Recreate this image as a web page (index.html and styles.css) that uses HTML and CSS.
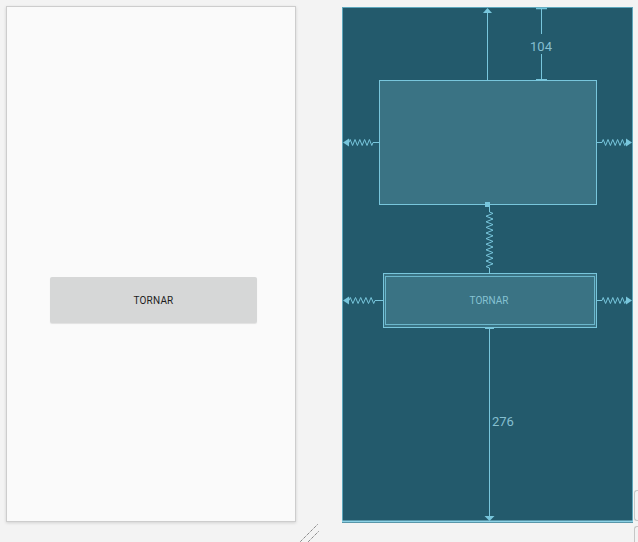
FILE: index.html
```html
<!DOCTYPE html>
<html>
<head>
<meta charset="utf-8">
<link rel="stylesheet" href="styles.css">
</head>
<body>
<div class="canvas">
  <div class="design">
    <div class="btn">TORNAR</div>
  </div>
  <div class="blueprint">
    <svg class="bp-svg" width="291" height="516" viewBox="343 7 291 516" xmlns="http://www.w3.org/2000/svg">
      <rect x="343" y="7" width="291" height="516" fill="#235a6c"/>
      <rect x="343.5" y="7.5" width="290" height="514" fill="none" stroke="#5ea7bc" stroke-width="1"/>
      <line x1="343" y1="521.5" x2="634" y2="521.5" stroke="#8dd2e6" stroke-width="2"/>

      <!-- top box -->
      <rect x="380.5" y="80.5" width="217" height="124" fill="#3a7384" stroke="#78c6dc" stroke-width="1"/>
      <!-- top constraint arrow -->
      <line x1="488.5" y1="10" x2="488.5" y2="80" stroke="#78c6dc" stroke-width="1"/>
      <polygon points="484,13 493,13 488.5,8" fill="#78c6dc"/>
      <!-- dimension 104 -->
      <line x1="542.5" y1="8" x2="542.5" y2="34" stroke="#78c6dc" stroke-width="1"/>
      <line x1="542.5" y1="54" x2="542.5" y2="80" stroke="#78c6dc" stroke-width="1"/>
      <line x1="537" y1="8.5" x2="548" y2="8.5" stroke="#78c6dc" stroke-width="1.5"/>
      <line x1="537" y1="80" x2="548" y2="80" stroke="#78c6dc" stroke-width="2"/>
      <text class="dim" x="542" y="50.5" text-anchor="middle">104</text>

      <!-- top box side springs -->
      <polygon points="344,142.5 350,138.5 350,146.5" fill="#78c6dc"/>
      <polyline fill="none" stroke="#78c6dc" stroke-width="1" points="350,142.5 351.2,139.5 353.6,145.5 356,139.5 358.4,145.5 360.8,139.5 363.2,145.5 365.6,139.5 368,145.5 370.4,139.5 372.8,145.5 374,142.5 380,142.5"/>
      <polyline fill="none" stroke="#78c6dc" stroke-width="1" points="597,142.5 603,142.5 604.2,139.5 606.6,145.5 609,139.5 611.4,145.5 613.8,139.5 616.2,145.5 618.6,139.5 621,145.5 623.4,139.5 625.8,145.5 627,142.5"/>
      <polygon points="627,138.5 627,146.5 633,142.5" fill="#78c6dc"/>

      <!-- anchor + vertical spring -->
      <rect x="486" y="202" width="5" height="5" fill="#78c6dc"/>
      <polyline fill="none" stroke="#78c6dc" stroke-width="1" points="490.5,207 490.5,212 494,213.4 487,216.2 494,219 487,221.8 494,224.6 487,227.4 494,230.2 487,233 494,235.8 487,238.6 494,241.4 487,244.2 494,247 487,249.8 494,252.6 487,255.4 494,258.2 487,261 494,263.8 487,266.6 490.5,268 490.5,273"/>

      <!-- button -->
      <rect x="384.5" y="273.5" width="213" height="54" fill="#3a7384" stroke="#78c6dc" stroke-width="1"/>
      <rect x="386.5" y="276.5" width="209" height="48" fill="none" stroke="#6bb7cc" stroke-width="1"/>
      <text class="btn-label" x="490" y="304" text-anchor="middle">TORNAR</text>

      <!-- button side springs -->
      <polygon points="344,300.5 350,296.5 350,304.5" fill="#78c6dc"/>
      <polyline fill="none" stroke="#78c6dc" stroke-width="1" points="350,300.5 351.3,297.5 353.9,303.5 356.5,297.5 359.1,303.5 361.7,297.5 364.3,303.5 366.9,297.5 369.5,303.5 372.1,297.5 374.7,303.5 376,300.5 384,300.5"/>
      <polyline fill="none" stroke="#78c6dc" stroke-width="1" points="597,300.5 603,300.5 604.2,297.5 606.6,303.5 609,297.5 611.4,303.5 613.8,297.5 616.2,303.5 618.6,297.5 621,303.5 623.4,297.5 625.8,303.5 627,300.5"/>
      <polygon points="627,296.5 627,304.5 633,300.5" fill="#78c6dc"/>

      <!-- bottom constraint -->
      <line x1="486" y1="328" x2="495" y2="328" stroke="#78c6dc" stroke-width="2"/>
      <line x1="490.5" y1="328" x2="490.5" y2="517" stroke="#78c6dc" stroke-width="1"/>
      <polygon points="485.5,516 495.5,516 490.5,521" fill="#78c6dc"/>
      <text class="dim" x="493" y="426">276</text>
    </svg>
  </div>
  <div class="edge">
    <div class="edge-tab tall"></div>
    <div class="edge-tab"></div>
  </div>
</div>
<svg class="resize" width="22" height="19" viewBox="298 523 22 19" xmlns="http://www.w3.org/2000/svg">
  <line x1="317.5" y1="524.5" x2="299.5" y2="542.5" stroke="#5a5a5a" stroke-width="1" stroke-dasharray="1 1"/>
  <line x1="318.5" y1="531.5" x2="307.5" y2="542.5" stroke="#5a5a5a" stroke-width="1" stroke-dasharray="1 1"/>
</svg>
</body>
</html>
```

FILE: styles.css
```css
html, body {
  margin: 0;
  padding: 0;
  width: 638px;
  height: 542px;
  overflow: hidden;
  background: #f3f3f3;
  font-family: Roboto, "Liberation Sans", sans-serif;
}

.canvas {
  display: flex;
  align-items: flex-start;
  padding: 6px 0 0 6px;
  height: 542px;
  box-sizing: border-box;
}

.design {
  width: 291px;
  height: 516px;
  box-sizing: border-box;
  border: 1px solid #cdcdcd;
  background: #fafafa;
  box-shadow: 0 1px 3px rgba(0, 0, 0, 0.14);
  padding: 270px 0 0 43px;
}

.btn {
  width: 207px;
  height: 46px;
  background: #d6d7d7;
  border-radius: 2px;
  box-shadow: 0 1px 1px rgba(0, 0, 0, 0.10);
  display: flex;
  align-items: center;
  justify-content: center;
  font-size: 10px;
  font-weight: 400;
  color: #1e1e1e;
  letter-spacing: 0.2px;
}

.blueprint {
  margin-left: 46px;
  margin-top: 1px;
  width: 291px;
  height: 516px;
}

.bp-svg {
  display: block;
}

.dim {
  font-family: Roboto, "Liberation Sans", sans-serif;
  font-size: 13px;
  fill: #86bfd0;
}

.btn-label {
  font-family: Roboto, "Liberation Sans", sans-serif;
  font-size: 10px;
  fill: #86c2d3;
}

.edge {
  margin-left: 1px;
  width: 4px;
  padding-top: 484px;
  display: flex;
  flex-direction: column;
  gap: 5px;
}

.edge-tab {
  height: 20px;
  border: 1px solid #c6c6c6;
  border-right: none;
  border-radius: 3px 0 0 3px;
}

.edge-tab.tall {
  height: 29px;
}

.resize {
  position: absolute;
  left: 298px;
  top: 523px;
}
```
